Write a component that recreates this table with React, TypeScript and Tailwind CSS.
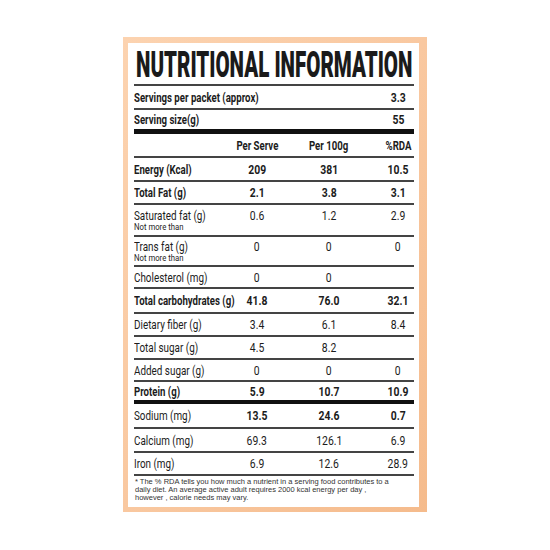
import React from 'react';

type Row = {
  label: string;
  sub?: string;
  v: [string, string, string];
  bold?: boolean;
  valBold?: boolean;
  h: string;
  pt?: string;
};

const lbl = 'inline-block whitespace-nowrap origin-left scale-x-[0.76]';
const lblB = 'inline-block whitespace-nowrap origin-left scale-x-[0.74]';
const val = 'inline-block whitespace-nowrap scale-x-[0.8]';
const cols = 'grid grid-cols-[104px_38px_106px_32px]';

const top: Row[] = [
  { label: 'Energy (Kcal)', v: ['209', '381', '10.5'], bold: true, h: 'h-[22px]' },
  { label: 'Total Fat (g)', v: ['2.1', '3.8', '3.1'], bold: true, h: 'h-[21px]' },
  { label: 'Saturated fat (g)', sub: 'Not more than', v: ['0.6', '1.2', '2.9'], h: 'h-[30px]', pt: 'pt-[4px]' },
  { label: 'Trans fat (g)', sub: 'Not more than', v: ['0', '0', '0'], h: 'h-[28px]', pt: 'pt-[3px]' },
  { label: 'Cholesterol (mg)', v: ['0', '0', ''], h: 'h-[20px]' },
  { label: 'Total carbohydrates (g)', v: ['41.8', '76.0', '32.1'], bold: true, h: 'h-[23px]' },
  { label: 'Dietary fiber (g)', v: ['3.4', '6.1', '8.4'], h: 'h-[21px]' },
  { label: 'Total sugar (g)', v: ['4.5', '8.2', ''], h: 'h-[21px]' },
  { label: 'Added sugar (g)', v: ['0', '0', '0'], h: 'h-[20px]' },
];

const minerals: Row[] = [
  { label: 'Sodium (mg)', v: ['13.5', '24.6', '0.7'], valBold: true, h: 'h-[23px]' },
  { label: 'Calcium (mg)', v: ['69.3', '126.1', '6.9'], h: 'h-[22px]' },
  { label: 'Iron (mg)', v: ['6.9', '12.6', '28.9'], h: 'h-[21px]' },
];

const Thin = () => <div className="h-[2px] bg-[#444]" />;

const NutriRow = ({ row }: { row: Row }) => (
  <div
    className={`${cols} ${row.h} ${row.pt ? `items-start ${row.pt}` : 'items-center'} text-[13px] leading-[13px] ${
      row.bold ? 'font-bold' : 'font-normal'
    }`}
  >
    <div className="flex flex-col">
      <span className={row.bold ? lblB : lbl}>{row.label}</span>
      {row.sub && (
        <span className="inline-block whitespace-nowrap origin-left scale-x-[0.86] text-[9px] leading-[10px]">
          {row.sub}
        </span>
      )}
    </div>
    {row.v.map((x, i) => (
      <div key={i} className={`flex justify-center ${row.bold || row.valBold ? 'font-bold' : ''}`}>
        <span className={val}>{x}</span>
      </div>
    ))}
  </div>
);

export default function App() {
  return (
    <div className="w-[550px] h-[550px] overflow-hidden bg-white pt-[37px] pl-[123px] font-[Roboto,sans-serif] text-[#1c1c1c]">
      <div className="w-[304px] h-[475px] pt-[6px] pl-[5px] bg-gradient-to-br from-[#fcd3b0] via-[#f9c8a0] to-[#f5bb8c]">
        <div className="w-[291px] h-[464px] bg-white pl-[6px] pr-[5px]">
          <div className="h-[41px] pt-[4px] leading-[36px] pl-[2px]">
            <span className="inline-block whitespace-nowrap origin-left scale-x-[0.57] text-[36px] font-black text-[#1a1a1a]">
              NUTRITIONAL INFORMATION
            </span>
          </div>
          <Thin />
          <div className={`${cols} h-[22px] items-center text-[13px] leading-[13px] font-bold`}>
            <span className={`${lblB} col-span-3`}>Servings per packet (approx)</span>
            <div className="flex justify-center">
              <span className={val}>3.3</span>
            </div>
          </div>
          <Thin />
          <div className={`${cols} h-[19px] items-center text-[13px] leading-[13px] font-bold`}>
            <span className={`${lblB} col-span-3`}>Serving size(g)</span>
            <div className="flex justify-center">
              <span className={val}>55</span>
            </div>
          </div>
          <div className="h-[5px] bg-[#111]" />
          <div className={`${cols} h-[22px] items-center text-[13px] leading-[13px] font-bold`}>
            <div />
            <div className="flex justify-center">
              <span className={lblB.replace('origin-left ', '')}>Per Serve</span>
            </div>
            <div className="flex justify-center">
              <span className={lblB.replace('origin-left ', '')}>Per 100g</span>
            </div>
            <div className="flex justify-center">
              <span className={lblB.replace('origin-left ', '')}>%RDA</span>
            </div>
          </div>
          <Thin />
          {top.map((r) => (
            <React.Fragment key={r.label}>
              <NutriRow row={r} />
              <Thin />
            </React.Fragment>
          ))}
          <NutriRow row={{ label: 'Protein (g)', v: ['5.9', '10.7', '10.9'], bold: true, h: 'h-[18px]' }} />
          <div className="h-[4px] bg-[#111]" />
          {minerals.map((r, i) => (
            <React.Fragment key={r.label}>
              <NutriRow row={r} />
              {i < 2 && <Thin />}
            </React.Fragment>
          ))}
          <Thin />
          <p className="pt-[2px] pl-[1px] font-['Liberation_Sans',Arial,sans-serif] text-[7.5px] leading-[8px] text-[#333] whitespace-nowrap">
            * The % RDA tells you how much a nutrient in a serving food contributes to a
            <br />
            daily diet. An average active adult requires 2000 kcal energy per day ,
            <br />
            however , calorie needs may vary.
          </p>
        </div>
      </div>
    </div>
  );
}
